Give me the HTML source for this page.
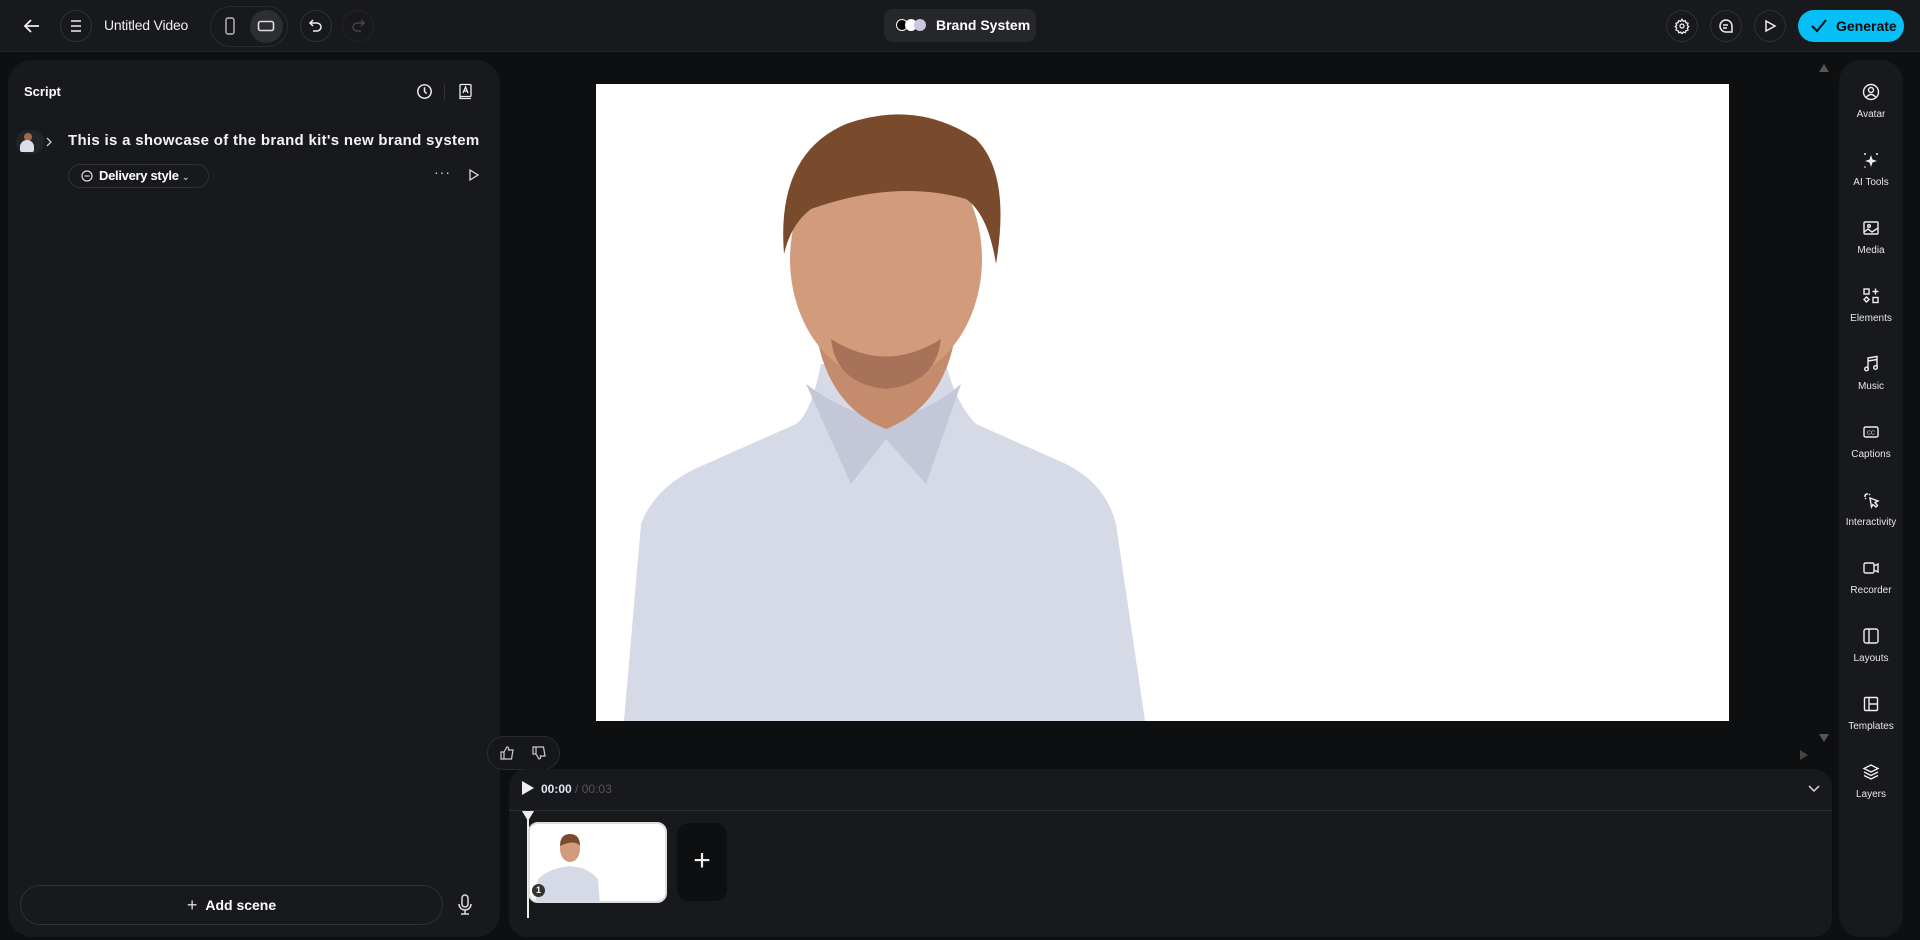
<!DOCTYPE html>
<html><head><meta charset="utf-8"><style>
*{box-sizing:border-box;margin:0;padding:0}
body{width:1920px;height:940px;background:#0e0f11;font-family:"Liberation Sans",sans-serif;color:#eee;position:relative;overflow:hidden}
.a{position:absolute}
.circ{position:absolute;border:1px solid #2e3035;border-radius:50%;display:flex;align-items:center;justify-content:center}
svg{display:block}
.side{position:absolute;left:1839px;top:60px;width:64px;height:877px;background:#18191c;border-radius:22px}
.it{position:absolute;left:0;width:64px;text-align:center;font-size:10px;color:#e6e6e6}
.it svg{margin:0 auto 8px}
</style></head><body>
<!-- top bar -->
<div class="a" style="left:0;top:0;width:1920px;height:52px;background:#18191c;border-bottom:1px solid #222"></div>
<svg class="a" style="left:22px;top:16px" width="20" height="20" viewBox="0 0 20 20" fill="none" stroke="#eee" stroke-width="1.8"><path d="M17 10H3M9 4l-6 6 6 6"/></svg>
<div class="circ" style="left:60px;top:10px;width:32px;height:32px"><svg width="16" height="16" viewBox="0 0 16 16" stroke="#eee" stroke-width="1.5"><path d="M3 3h10M3 8h10M3 13h10"/></svg></div>
<div class="a" style="left:104px;top:17px;font-size:14px;color:#eee;letter-spacing:-0.2px">Untitled Video</div>
<div class="a" style="left:210px;top:6px;width:78px;height:41px;border:1px solid #2a2c30;border-radius:21px"></div>
<svg class="a" style="left:224px;top:17px" width="12" height="18" viewBox="0 0 12 18" fill="none" stroke="#bbb" stroke-width="1.4"><rect x="2" y="1" width="8" height="16" rx="2"/></svg>
<div class="a" style="left:250px;top:10px;width:33px;height:33px;border-radius:50%;background:#2c2e33"></div>
<svg class="a" style="left:257px;top:19px" width="18" height="14" viewBox="0 0 18 14" fill="none" stroke="#ddd" stroke-width="1.6"><rect x="1.5" y="2.5" width="15" height="9" rx="2"/></svg>
<div class="circ" style="left:300px;top:10px;width:32px;height:32px"><svg width="16" height="16" viewBox="0 0 16 16" fill="none" stroke="#eee" stroke-width="1.5"><path d="M5 2L2 5l3 3M2 5h7a4 4 0 010 8H5"/></svg></div>
<div class="circ" style="left:342px;top:10px;width:32px;height:32px;border-color:#222"><svg width="16" height="16" viewBox="0 0 16 16" fill="none" stroke="#444" stroke-width="1.5"><path d="M11 2l3 3-3 3M14 5H7a4 4 0 000 8h4"/></svg></div>
<div class="a" style="left:884px;top:9px;width:152px;height:33px;background:#25272b;border-radius:9px"></div>
<div class="a" style="left:896px;top:19px;width:12px;height:12px;border-radius:50%;background:#000;border:1px solid #fff"></div>
<div class="a" style="left:905px;top:19px;width:12px;height:12px;border-radius:50%;background:#fff"></div>
<div class="a" style="left:914px;top:19px;width:12px;height:12px;border-radius:50%;background:#c9c6e0"></div>
<div class="a" style="left:936px;top:17px;font-size:14px;font-weight:bold;color:#fff">Brand System</div>
<div class="circ" style="left:1666px;top:10px;width:32px;height:32px"><svg width="16" height="16" viewBox="0 0 24 24" fill="none" stroke="#eee" stroke-width="2"><circle cx="12" cy="12" r="3"/><path d="M12 2l2 3 3-1 1 3 3 1-1 3 2 2-2 2 1 3-3 1-1 3-3-1-2 3-2-3-3 1-1-3-3-1 1-3-2-2 2-2-1-3 3-1 1-3 3 1z"/></svg></div>
<div class="circ" style="left:1710px;top:10px;width:32px;height:32px"><svg width="16" height="16" viewBox="0 0 16 16" fill="none" stroke="#eee" stroke-width="1.5"><path d="M8 2a6 6 0 016 6v6H8a6 6 0 010-12zM5 7h5M5 10h4"/></svg></div>
<div class="circ" style="left:1754px;top:10px;width:32px;height:32px"><svg width="14" height="14" viewBox="0 0 14 14" fill="none" stroke="#eee" stroke-width="1.5"><path d="M3 2l9 5-9 5z"/></svg></div>
<div class="a" style="left:1798px;top:10px;width:106px;height:32px;background:#06bff6;border-radius:16px;color:#0b0b0b;font-size:14px;font-weight:bold;line-height:32px;padding-left:38px">Generate</div>
<svg class="a" style="left:1810px;top:18px" width="18" height="16" viewBox="0 0 18 16" fill="none" stroke="#0b0b0b" stroke-width="2"><path d="M2 8l5 5 9-11"/></svg>

<!-- left panel -->
<div class="a" style="left:8px;top:60px;width:492px;height:877px;background:#18191c;border-radius:24px"></div>
<div class="a" style="left:24px;top:84px;font-size:13px;font-weight:bold;color:#fff">Script</div>
<svg class="a" style="left:416px;top:83px" width="17" height="17" viewBox="0 0 16 16" fill="none" stroke="#eee" stroke-width="1.4"><circle cx="8" cy="8" r="6.3"/><path d="M8 4v4l2 2"/></svg>
<div class="a" style="left:444px;top:84px;width:1px;height:16px;background:#333"></div>
<svg class="a" style="left:458px;top:83px" width="15" height="17" viewBox="0 0 15 17" fill="none" stroke="#eee" stroke-width="1.3"><rect x="2" y="1.5" width="11" height="12" rx="1"/><path d="M2 13.5v2h11M5 10l2.5-6 2.5 6M6 8h3"/></svg>
<div class="a" style="left:16px;top:130px;width:28px;height:24px;background:#222428;border-radius:12px"></div>
<div class="a" style="left:24px;top:133px;width:8px;height:8px;border-radius:50%;background:#a06a4a"></div>
<div class="a" style="left:20px;top:140px;width:14px;height:12px;border-radius:7px 7px 2px 2px;background:#dcdde6"></div>
<svg class="a" style="left:45px;top:137px" width="8" height="10" viewBox="0 0 8 10" fill="none" stroke="#ccc" stroke-width="1.3"><path d="M2 1l4 4-4 4"/></svg>
<div class="a" style="left:68px;top:132px;font-size:15px;font-weight:bold;color:#f3f3f3;letter-spacing:0.3px">This is a showcase of the brand kit's new brand system</div>
<div class="a" style="left:68px;top:164px;width:141px;height:24px;border:1px solid #2e3035;border-radius:12px;font-size:13px;font-weight:bold;color:#fff;line-height:22px;padding-left:30px;letter-spacing:-0.3px">Delivery style <span style="font-size:9px;color:#aaa">⌄</span></div>
<svg class="a" style="left:81px;top:170px" width="12" height="13" viewBox="0 0 12 13" fill="none" stroke="#ddd" stroke-width="1.2"><circle cx="6" cy="6" r="5"/><path d="M3.5 6h5"/></svg>
<div class="a" style="left:434px;top:164px;font-size:14px;color:#ddd;letter-spacing:1px">···</div>
<svg class="a" style="left:468px;top:168px" width="12" height="14" viewBox="0 0 12 14" fill="none" stroke="#ddd" stroke-width="1.3"><path d="M2 2l8 5-8 5z"/></svg>
<div class="a" style="left:20px;top:885px;width:423px;height:40px;border:1px solid #2e3035;border-radius:20px;text-align:center;line-height:38px;font-size:14px;font-weight:bold;color:#fff"><span style="font-weight:normal;font-size:18px;color:#ddd;margin-right:8px;vertical-align:-1px">+</span>Add scene</div>
<svg class="a" style="left:456px;top:894px" width="18" height="22" viewBox="0 0 18 22" fill="none" stroke="#ddd" stroke-width="1.5"><rect x="6" y="1" width="6" height="12" rx="3"/><path d="M3 10a6 6 0 0012 0M9 16v4M5 20h8"/></svg>

<!-- canvas -->
<div class="a" style="left:596px;top:84px;width:1133px;height:637px;background:#fff;overflow:hidden">
<svg width="1133" height="637" viewBox="0 0 1133 637">
<path d="M28 637 L45 440 Q60 400 110 380 L200 340 Q215 330 225 280 L350 280 Q360 320 380 340 L470 380 Q510 400 520 440 L549 637 Z" fill="#d6d9e6"/>
<path d="M210 300 L255 400 L290 355 L330 400 L365 300 Q330 330 290 335 Q250 330 210 300Z" fill="#c3c7d8"/>
<path d="M218 230 Q225 320 290 345 Q355 320 362 230 L362 200 L218 200Z" fill="#c48b6c"/>
<ellipse cx="290" cy="175" rx="96" ry="122" fill="#d29c7c"/>
<path d="M188 170 Q180 70 250 40 Q320 15 380 55 Q415 90 400 180 Q392 130 370 115 Q300 95 215 125 Q195 140 188 170Z" fill="#7a4a2c"/>
<path d="M235 255 Q290 290 345 255 Q340 300 290 305 Q240 300 235 255Z" fill="#a77257"/>
</svg></div>
<svg class="a" style="left:1819px;top:64px" width="10" height="8"><path d="M0 8L5 0 10 8z" fill="#555"/></svg>
<svg class="a" style="left:1819px;top:734px" width="10" height="8"><path d="M0 0L5 8 10 0z" fill="#555"/></svg>
<svg class="a" style="left:1800px;top:750px" width="8" height="10"><path d="M0 0L8 5 0 10z" fill="#444"/></svg>

<!-- feedback -->
<div class="a" style="left:487px;top:736px;width:73px;height:34px;background:#16171a;border:1px solid #2a2c30;border-radius:17px"></div>
<svg class="a" style="left:499px;top:745px" width="16" height="16" viewBox="0 0 16 16" fill="none" stroke="#ccc" stroke-width="1.2"><path d="M2 7h3v7H2zM5 7l3-5q2 0 1.5 3H14l-1.5 9H5"/></svg>
<svg class="a" style="left:531px;top:745px" width="16" height="16" viewBox="0 0 16 16" fill="none" stroke="#ccc" stroke-width="1.2"><path d="M2 2h3v7H2zM5 9l3 5q2 0 1.5-3H14l-1.5-9H5"/></svg>

<!-- timeline -->
<div class="a" style="left:509px;top:769px;width:1323px;height:168px;background:#18191c;border-radius:18px"></div>
<div class="a" style="left:509px;top:810px;width:1323px;height:1px;background:#2c2e33"></div>
<svg class="a" style="left:522px;top:781px" width="12" height="14"><path d="M0 0L12 7 0 14z" fill="#eee"/></svg>
<div class="a" style="left:541px;top:782px;font-size:12px"><b style="color:#dfe8f5">00:00</b> <span style="color:#555">/ 00:03</span></div>
<svg class="a" style="left:1808px;top:785px" width="12" height="8" fill="none" stroke="#ddd" stroke-width="1.5"><path d="M1 1l5 5 5-5"/></svg>
<div class="a" style="left:527px;top:818px;width:2px;height:100px;background:#eee"></div>
<svg class="a" style="left:522px;top:811px" width="12" height="10"><path d="M0 0h12L6 10z" fill="#eee"/></svg>
<div class="a" style="left:528px;top:822px;width:139px;height:81px;background:#fff;border:2px solid #ddd;border-radius:10px;overflow:hidden">
<svg width="139" height="81" viewBox="0 0 139 81"><path d="M5 81L8 55Q15 48 28 44L40 42 52 44Q62 48 68 55L70 81Z" fill="#d6d9e6"/><ellipse cx="40" cy="25" rx="10" ry="13" fill="#d29c7c"/><path d="M30 22Q30 10 40 10Q50 10 50 22Q45 15 30 22Z" fill="#7a4a2c"/></svg></div>
<div class="a" style="left:532px;top:884px;width:13px;height:13px;border-radius:50%;background:#333;color:#fff;font-size:9px;font-weight:bold;text-align:center;line-height:13px">1</div>
<div class="a" style="left:677px;top:823px;width:50px;height:78px;background:#0e0f11;border-radius:12px;text-align:center;line-height:76px;font-size:30px;color:#eee;font-weight:300">+</div>

<!-- right sidebar -->
<div class="side">
<div class="it" style="top:23px"><svg width="18" height="18" viewBox="0 0 18 18" fill="none" stroke="#eee" stroke-width="1.4"><circle cx="9" cy="9" r="7.5"/><circle cx="9" cy="7" r="2.5"/><path d="M4.5 14q4.5-5 9 0"/></svg>Avatar</div>
<div class="it" style="top:91px"><svg width="18" height="18" viewBox="0 0 18 18" fill="#eee"><path d="M9 4l1.5 4.5L15 10l-4.5 1.5L9 16l-1.5-4.5L3 10l4.5-1.5z"/><circle cx="15" cy="3" r="1"/><circle cx="3" cy="3" r="1"/><circle cx="3" cy="16" r=".8"/></svg>AI Tools</div>
<div class="it" style="top:159px"><svg width="18" height="18" viewBox="0 0 18 18" fill="none" stroke="#eee" stroke-width="1.4"><rect x="2" y="3" width="14" height="12" rx="1"/><circle cx="7" cy="7" r="1.3"/><path d="M2 13l4-3 4 3 6-4"/></svg>Media</div>
<div class="it" style="top:227px"><svg width="18" height="18" viewBox="0 0 18 18" fill="none" stroke="#eee" stroke-width="1.4"><rect x="2" y="2" width="5" height="5"/><path d="M13.5 1.5v6M10.5 4.5h6M4.5 10l2.5 2.5-2.5 2.5-2.5-2.5z"/><rect x="11" y="10.5" width="5" height="5"/></svg>Elements</div>
<div class="it" style="top:295px"><svg width="18" height="18" viewBox="0 0 18 18" fill="none" stroke="#eee" stroke-width="1.4"><path d="M6 14V3l9-1.5V12M6 6l9-1.5"/><circle cx="4.5" cy="14" r="1.8"/><circle cx="13.5" cy="12.5" r="1.8"/></svg>Music</div>
<div class="it" style="top:363px"><svg width="18" height="18" viewBox="0 0 18 18" fill="none" stroke="#eee" stroke-width="1.4"><rect x="2" y="4" width="14" height="10" rx="1.5"/><text x="9" y="11.5" font-size="5.5" fill="#eee" stroke="none" text-anchor="middle" font-family="Liberation Sans">CC</text></svg>Captions</div>
<div class="it" style="top:431px"><svg width="18" height="18" viewBox="0 0 18 18" fill="none" stroke="#eee" stroke-width="1.4"><path d="M8 7l8 3-3 1.5 2.5 3-1.5 1.5-3-2.5L9.5 16z"/><path d="M5 2v2M2 5h2M3 3l1 1M8 3l-1 1M3 8l1-1"/></svg>Interactivity</div>
<div class="it" style="top:499px"><svg width="18" height="18" viewBox="0 0 18 18" fill="none" stroke="#eee" stroke-width="1.4"><rect x="2" y="4" width="10" height="10" rx="1.5"/><path d="M12 7l4-2v8l-4-2"/></svg>Recorder</div>
<div class="it" style="top:567px"><svg width="18" height="18" viewBox="0 0 18 18" fill="none" stroke="#eee" stroke-width="1.4"><rect x="2" y="2" width="14" height="14" rx="2"/><path d="M7 2v14"/></svg>Layouts</div>
<div class="it" style="top:635px"><svg width="18" height="18" viewBox="0 0 18 18" fill="none" stroke="#eee" stroke-width="1.4"><rect x="2.5" y="2.5" width="13" height="13" rx="1"/><path d="M7 2.5v13M7 9h8.5"/></svg>Templates</div>
<div class="it" style="top:703px"><svg width="18" height="18" viewBox="0 0 18 18" fill="none" stroke="#eee" stroke-width="1.4"><path d="M9 2l7 3.5-7 3.5-7-3.5z"/><path d="M2 9l7 3.5L16 9M2 12.5l7 3.5 7-3.5"/></svg>Layers</div>
</div>
</body></html>
